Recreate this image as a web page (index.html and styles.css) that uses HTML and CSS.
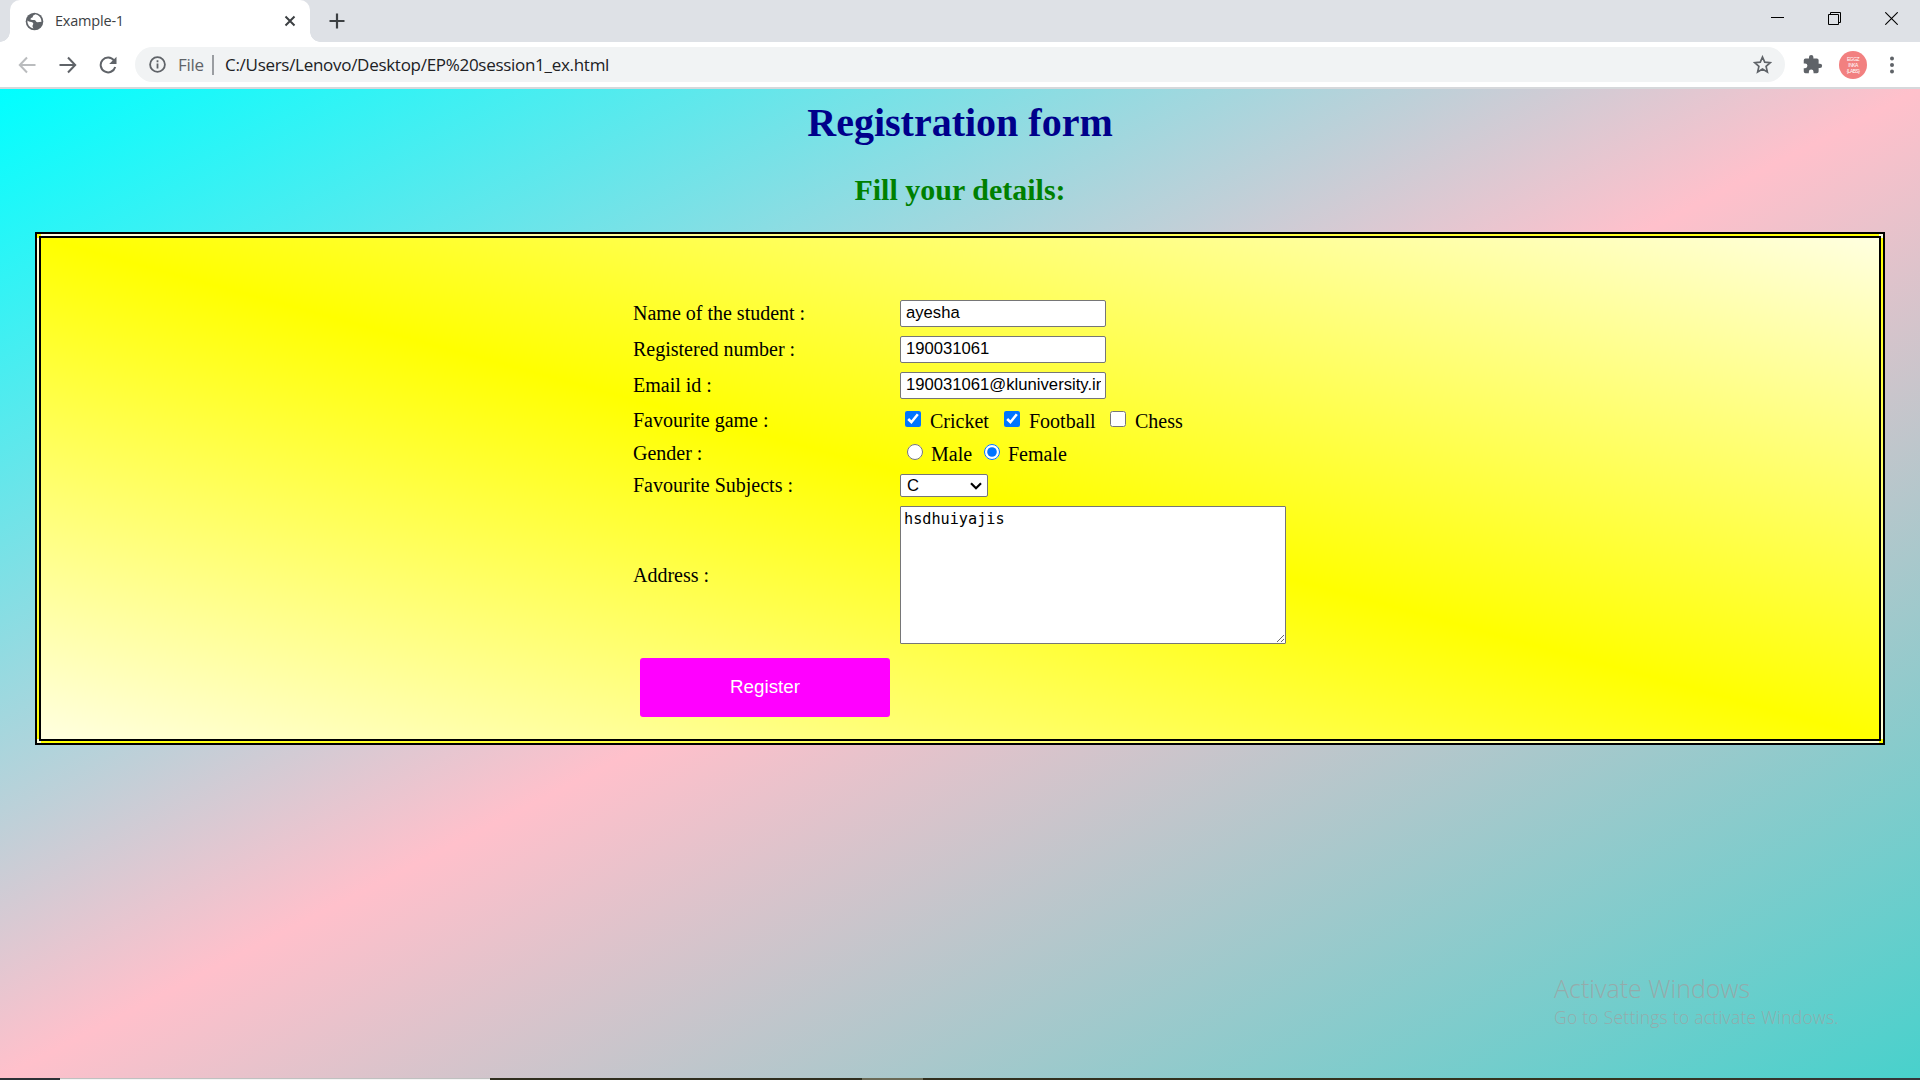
FILE: index.html
```html
<!DOCTYPE html>
<html lang="en">
<head>
<meta charset="utf-8">
<title>Example-1</title>
<link rel="stylesheet" href="styles.css">
</head>
<body>
<div class="screen">
  <header class="tabstrip">
    <div class="tab">
      <svg class="globe" width="19" height="19" viewBox="0 0 19 19"><circle cx="9.500" cy="9.500" r="8.800" fill="#5f6368"/><path d="M10.500 2.300c-1 .8-2.700 1-2.700 2.400 0 1.200-2.300.8-2.300 2.300 0 1.300 2.500.8 4 1.100 1.600.3 1.400 2.200 3 2.200 1.500 0 2.700-.5 4-.5a7.200 7.200 0 0 0-6-7.500zM2.400 8.600c1 1.500 3.900 1.200 5.200 2 1.300.9.400 2.100 0 2.900-.4.900.4 2 .8 3A7.200 7.200 0 0 1 2.400 8.600z" fill="#fff"/></svg>
      <span class="tab-title">Example-1</span>
      <svg width="12" height="12" viewBox="0 0 12 12" stroke="#3c4043" stroke-width="2"><path d="M1.500 1.500l9 9M10.500 1.500l-9 9"/></svg>
    </div>
    <svg class="plus" width="16" height="16" viewBox="0 0 16 16" stroke="#3c4043" stroke-width="2.200"><path d="M8 .5v15M.5 8h15"/></svg>
    <div class="window-buttons">
      <svg width="13" height="13" viewBox="0 0 13 13" stroke="#000"><path d="M0 5.500h13"/></svg>
      <svg width="13" height="13" viewBox="0 0 13 13" stroke="#000" fill="none"><path d="M.5 2.500h10v10H.5zM2.500 2.500v-2h10v10h-2"/></svg>
      <svg width="13" height="13" viewBox="0 0 13 13" stroke="#000" stroke-width="1.100"><path d="M.3.3l12.400 12.400M12.700.3L.3 12.700"/></svg>
    </div>
  </header>
  <nav class="toolbar">
    <svg class="back" width="18" height="18" viewBox="0 0 18 18" fill="none" stroke="#babcbe" stroke-width="2"><path d="M17.500 9H2M9 1.500L1.800 9 9 16.500"/></svg>
    <svg class="forward" width="18" height="18" viewBox="0 0 18 18" fill="none" stroke="#5f6368" stroke-width="2"><path d="M.5 9h15.500M9 1.500L16.200 9 9 16.500"/></svg>
    <svg class="reload" width="18" height="18" viewBox="0 0 18 18" fill="none" stroke="#5f6368" stroke-width="2"><path d="M15 4.500A7.400 7.400 0 1 0 16.200 11"/><path d="M17.500.8v7.300h-7.300z" fill="#5f6368" stroke="none"/></svg>
    <div class="omnibox">
      <svg width="17" height="17" viewBox="0 0 17 17" fill="none" stroke="#5f6368" stroke-width="1.800"><circle cx="8.500" cy="8.500" r="7.400"/><path d="M8.500 7.500v5M8.500 4.300v2"/></svg>
      <span class="scheme">File</span>
      <span class="separator"></span>
      <span class="url">C:/Users/Lenovo/Desktop/EP%20session1_ex.html</span>
      <svg class="star" width="19" height="19" viewBox="0 0 18 18" fill="none" stroke="#5f6368" stroke-width="1.600"><path d="M9 1.900l2.100 4.900 5.300.5-4 3.500 1.200 5.200L9 13.200 4.400 16l1.200-5.200-4-3.500 5.300-.5z"/></svg>
    </div>
    <svg class="puzzle" width="21" height="21" viewBox="0 0 24 24" fill="#5f6368"><path d="M20.500 11H19V7a2 2 0 0 0-2-2h-4V3.500a2.500 2.500 0 0 0-5 0V5H4a2 2 0 0 0-2 2v3.800h1.500a2.700 2.700 0 0 1 0 5.400H2V20a2 2 0 0 0 2 2h3.800v-1.500a2.700 2.700 0 0 1 5.400 0V22H17a2 2 0 0 0 2-2v-4h1.500a2.500 2.500 0 0 0 0-5z"/></svg>
    <div class="avatar"><span>EGGZ</span><span>INKA</span><span>{LABS}</span></div>
    <svg class="dots" width="4" height="18" viewBox="0 0 4 18" fill="#5f6368"><circle cx="2" cy="2.500" r="2"/><circle cx="2" cy="9" r="2"/><circle cx="2" cy="15.500" r="2"/></svg>
  </nav>
  <main class="page">
    <h1>Registration form</h1>
    <h2>Fill your details:</h2>
    <form class="registration">
      <div class="fields">
        <label>Name of the student :</label>
        <div><input class="text" type="text" value="ayesha"></div>
        <label>Registered number :</label>
        <div><input class="text" type="text" value="190031061"></div>
        <label>Email id :</label>
        <div><input class="text" type="text" value="190031061@kluniversity.in"></div>
        <label>Favourite game :</label>
        <div class="choices games">
          <input type="checkbox" checked><span>Cricket</span>
          <input type="checkbox" checked><span>Football</span>
          <input type="checkbox"><span>Chess</span>
        </div>
        <label>Gender :</label>
        <div class="choices genders">
          <input type="radio" name="gender"><span>Male</span>
          <input type="radio" name="gender" checked><span>Female</span>
        </div>
        <label>Favourite Subjects :</label>
        <div class="select"><span>C</span><svg width="12" height="8" viewBox="0 0 12 8" fill="none" stroke="#000" stroke-width="2.200"><path d="M1 1.200l5 5 5-5"/></svg></div>
        <label>Address :</label>
        <div><textarea>hsdhuiyajis</textarea></div>
        <button class="register" type="button">Register</button>
      </div>
    </form>
    <div class="watermark"><div class="wm-title">Activate Windows</div><div class="wm-text">Go to Settings to activate Windows.</div></div>
  </main>
  <footer class="taskbar"><i class="start"></i><i class="search"></i><i class="apps"></i><i class="active"></i><i class="rest"></i></footer>
</div>
</body>
</html>
```
FILE: styles.css
```css
* { box-sizing: border-box; }
body { margin: 0; font-family: "Liberation Serif", serif; }
svg { display: block; flex: none; }
.screen { width: 1920px; height: 1080px; display: flex; flex-direction: column; overflow: hidden; }

.tabstrip { height: 42px; flex: none; background: #dee1e6; display: flex; align-items: center; padding-left: 10px; font-family: "Open Sans", sans-serif; }
.tab { position: relative; width: 300px; height: 42px; background: #fff; border-radius: 10px 10px 0 0; display: flex; align-items: center; padding: 0 14px 0 15px; }
.tab::before, .tab::after { content: ""; position: absolute; bottom: 0; width: 10px; height: 10px; }
.tab::before { left: -10px; background: radial-gradient(circle at 0 0, transparent 9.500px, #fff 10px); }
.tab::after { right: -10px; background: radial-gradient(circle at 100% 0, transparent 9.500px, #fff 10px); }
.tab-title { margin: -2px 0 0 11px; flex: 1; font-size: 14.500px; color: #3c4043; letter-spacing: -.2px; }
.plus { margin-left: 19px; }
.window-buttons { margin-left: auto; display: flex; gap: 44px; padding: 0 22px 6px 0; }

.toolbar { height: 47px; flex: none; background: #fff; border-bottom: 2px solid #d6d8db; display: flex; align-items: center; padding: 0 26px 0 18px; font-family: "Open Sans", sans-serif; }
.forward { margin-left: 23px; }
.reload { margin-left: 22px; }
.omnibox { height: 35px; width: 1650px; margin-left: 18px; border-radius: 18px; background: #f1f3f4; display: flex; align-items: center; padding: 0 13px 0 14px; font-size: 17px; flex: none; }
.scheme { margin-left: 12px; width: 34px; color: #5f6368; letter-spacing: -.3px; }
.separator { width: 2px; height: 20px; background: #9a9da1; }
.url { margin-left: 11px; color: #202124; letter-spacing: -.29px; }
.star { margin-left: auto; }
.puzzle { margin-left: 17px; }
.avatar { margin-left: 16px; width: 28px; height: 28px; border-radius: 50%; background: #f28080; color: #fff; display: flex; flex-direction: column; align-items: center; justify-content: center; font: 5px/6px "Liberation Sans", sans-serif; letter-spacing: -.6px; }
.dots { margin-left: auto; }

.page { position: relative; height: 989px; flex: none; padding: 11px 35px 0; background: linear-gradient(to bottom right, cyan, pink, mediumturquoise); }
h1 { margin: 0; font-size: 40px; line-height: 46px; text-align: center; color: darkblue; }
h2 { margin: 26px 0 25px; font-size: 30px; line-height: 35px; text-align: center; color: green; }
.registration { height: 513px; border: 6px double #000; padding-top: 57px; background: linear-gradient(to top right, lightyellow, yellow, lightyellow); }
.fields { display: grid; width: 654px; margin: 0 auto; grid-template-columns: 267px 387px; grid-template-rows: 36px 36px 36px 34px 33px 31px 148px 76px; align-items: center; font-size: 20px; line-height: 23px; }
.fields > div { display: flex; align-items: center; }
.text { width: 206px; height: 27px; border: 1px solid #767676; border-radius: 2px; padding: 0 4px 1px 5px; font: 16.667px "Liberation Sans", sans-serif; color: #000; background: #fff; }
.choices input { width: 16px; height: 16px; margin: 0 9px 3px 0; flex: none; }
.choices span { padding-top: 2px; }
.fields > .games { padding-left: 5px; }
.games span { width: 74px; }
.games span:nth-of-type(2) { width: 81px; }
.fields > .genders { padding-left: 7px; }
.genders input { margin-right: 8px; }
.genders span { width: 53px; }
.fields > .select { width: 88px; height: 23px; border: 1px solid #767676; border-radius: 2px; background: #fff; justify-content: space-between; padding: 0 5px 0 6px; font: 16.667px "Liberation Sans", sans-serif; }
textarea { width: 386px; height: 138px; border: 1px solid #767676; border-radius: 1px; padding: 3px; font: 15.200px/19px "DejaVu Sans Mono", monospace; color: #000; background: #fff; }
.register { width: 250px; height: 59px; margin-left: 7px; border: 0; border-radius: 3px; background: magenta; color: #fff; font: 18.750px "Liberation Sans", sans-serif; }

.watermark { position: absolute; left: 1554px; top: 882px; color: rgba(160, 160, 160, .75); font-family: "Open Sans", sans-serif; font-weight: 300; white-space: nowrap; }
.wm-title { font-size: 25px; line-height: 34px; }
.wm-text { font-size: 17.500px; line-height: 24px; letter-spacing: .25px; }

.taskbar { height: 2px; display: flex; }
.start { width: 60px; background: #2c3136; }
.search { width: 430px; background: #f5f5f5; border-top: 1px solid #bfc1c0; }
.apps { width: 372px; background: #2f2e1e; }
.active { width: 61px; background: #6a6a56; }
.rest { flex: 1; background: linear-gradient(to right, #312f1e, #35351f 70%, #35363b); }
```
